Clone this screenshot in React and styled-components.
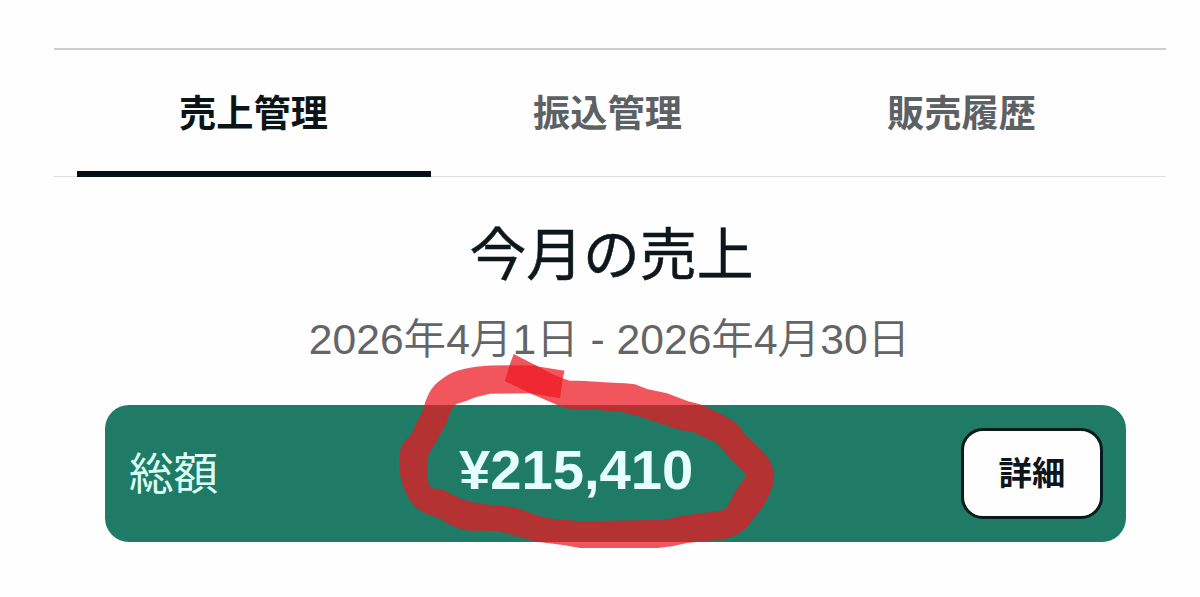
import React from "react";
import styled, { createGlobalStyle } from "styled-components";

const GlobalStyle = createGlobalStyle`
  body {
    margin: 0;
    background-color: #fefefe;
    font-family: "Liberation Sans", "Noto Sans CJK JP", sans-serif;
  }
`

const Page = styled.main`
  position: relative;
  box-sizing: border-box;
  width: 1200px;
  height: 597px;
  padding: 48px 34px 0 54px;
  overflow: hidden;
`
const Tabs = styled.nav`
  display: flex;
  box-sizing: border-box;
  height: 129px;
  padding: 0 27px 0 23px;
  border-top: 2px solid #cdcdce;
  box-shadow: inset 0 -1px 0 #dedfdf;
`
const Tab = styled.button`
  flex: 1;
  height: 127px;
  padding: 1px 1px 0 0;
  border: 0;
  border-bottom: 6px solid ${({ $active }) => ($active ? "#060f11" : "transparent")};
  background: none;
  color: ${({ $active }) => ($active ? "#0b1417" : "#5c6164")};
  font: 700 37.2px/54px "Noto Sans CJK JP", sans-serif;
`
const Heading = styled.h1`
  margin: 33px 0 0;
  padding-left: 3px;
  color: #0e171b;
  font: 400 56.8px/80px "Noto Sans CJK JP", sans-serif;
  text-align: center;
  -webkit-text-stroke: 0.5px #0e171b;
`
const Period = styled.p`
  margin: 17px 0 0;
  padding-right: 1px;
  color: #646567;
  font-size: 42.6px;
  font-weight: 350;
  line-height: 64px;
  text-align: center;
  white-space: nowrap;
`
const TotalCard = styled.section`
  display: grid;
  grid-template-columns: 330px 1fr 142px;
  align-items: center;
  box-sizing: border-box;
  width: 1021px;
  height: 137px;
  margin: 34px 0 0 51px;
  padding: 0 23px 0 24px;
  border-radius: 24px;
  background-color: #1f7b65;
`
const TotalLabel = styled.span`
  padding-bottom: 5px;
  color: #dcfff7;
  font: 400 44.6px/64px "Noto Sans CJK JP", sans-serif;
`
const Amount = styled.strong`
  padding-bottom: 7px;
  color: #e6fffc;
  font-size: 56.2px;
  line-height: 64px;
`
const DetailButton = styled.button`
  box-sizing: border-box;
  height: 91px;
  padding: 0 0 6px;
  border: 3px solid #081b1b;
  border-radius: 22px;
  background-color: #fefefe;
  color: #0e151b;
  font: 700 33.4px/48px "Noto Sans CJK JP", sans-serif;
`
const Marker = styled.svg`
  position: absolute;
  top: 0;
  left: 0;
  pointer-events: none;
`

const tabs = ["売上管理", "振込管理", "販売履歴"]

const OUTER = "M491 365.5L509.5 365.3L513.7 354L538 366.5L564.5 370.7L562.8 378.6L570 380.7L580 380.7L613 382.7Q626 383 635 384.3L647 389L667 393.3L688 401.3L700 404.3Q721 413 735 422.3Q741 428 747 436.7L763 451.7Q775 465 774 477Q773 491 762 508L752 520Q746 531 732 536.7Q724 540 713 540.3L687 543Q672 547 658 548L580 548L565 545.3L537 541.7L510 534.3Q501 531 490 530.7L470 530.7Q459 530 447 523Q439 517 430 515.3Q413 509 407 495Q400 481 399 465Q399 455 401 448.3Q404 441 412 433.3Q416 423 423 410Q425 401 429 393.3Q433 385 443 378.3Q451 372 463 369.3Q476 366 491 365.5Z"
const INNER = "M456.3 404L467 400.7Q473 397 490 393.7L530 393.3L555 404Q563 408 570 408.7L597 410L623 412.3L640 416.7L680 430L692 431.7L715 441.7Q721 446 727 455L746.7 475L735 491.7L727 507.7Q722 511 713 511.7L680 516Q668 520 653 520L580 521.3L567 520Q554 520 540 516.3L515 507.3L490 504.7Q476 504 460 498.3L443 490Q437 488 431 488.3Q427 482 427 473.3L427.7 456.7Q433 446 440 435Q446 425 448 418.3Q451 408 456.3 404Z"

const HandCircle = () => (
  <Marker width="1200" height="597" viewBox="0 0 1200 597" fill="#ed1721" fillOpacity=".73">
    <path fillRule="evenodd" d={`${OUTER}${INNER}`} />
    {/* start and end of the stroke cross here */}
    <path d="M509.5 365.3L536 365.6L548 372L562.8 378.6L560 398.3L530 393.3L505 381Z" />
  </Marker>
)

export default function App() {
  return (
    <>
      <GlobalStyle />
      <Page>
        <Tabs>
          {tabs.map((name, i) => (
            <Tab key={name} type="button" $active={i === 0}>{name}</Tab>
          ))}
        </Tabs>
        <Heading>今月の売上</Heading>
        <Period>2026年4月1日 - 2026年4月30日</Period>
        <TotalCard>
          <TotalLabel>総額</TotalLabel>
          <Amount>¥215,410</Amount>
          <DetailButton type="button">詳細</DetailButton>
        </TotalCard>
        <HandCircle />
      </Page>
    </>
  )
}
